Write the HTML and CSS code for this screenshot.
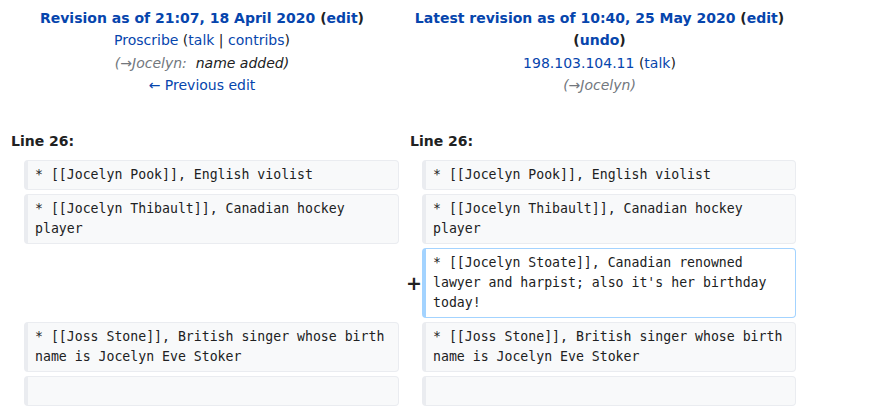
FILE: index.html
```html
<!DOCTYPE html>
<html>
<head>
<meta charset="utf-8">
<link rel="stylesheet" href="styles.css">
</head>
<body>
<div class="diff">
  <div class="title">
    <div><strong><a>Revision as of 21:07, 18 April 2020</a> <span class="paren">(<a>edit</a>)</span></strong></div>
    <div><a>Proscribe</a> (<a>talk</a> | <a>contribs</a>)</div>
    <div class="summary"><span class="grey">(→Jocelyn:</span>&nbsp; name added)</div>
    <div><a>← Previous edit</a></div>
  </div>
  <div class="title">
    <div><strong><a>Latest revision as of 10:40, 25 May 2020</a> (<a>edit</a>)</strong></div>
    <div><strong>(<a>undo</a>)</strong></div>
    <div><a>198.103.104.11</a> (<a>talk</a>)</div>
    <div class="summary grey">(→Jocelyn)</div>
  </div>

  <div class="lineno">Line 26:</div>
  <div class="lineno right">Line 26:</div>

  <div class="marker"></div>
  <div class="line context">* [[Jocelyn Pook]], English violist</div>
  <div class="marker"></div>
  <div class="line context">* [[Jocelyn Pook]], English violist</div>

  <div class="marker"></div>
  <div class="line context">* [[Jocelyn Thibault]], Canadian hockey player</div>
  <div class="marker"></div>
  <div class="line context">* [[Jocelyn Thibault]], Canadian hockey player</div>

  <div class="empty"></div>
  <div class="marker plus"><span>+</span></div>
  <div class="line added">* [[Jocelyn Stoate]], Canadian renowned lawyer and harpist; also it's her birthday today!</div>

  <div class="marker"></div>
  <div class="line context">* [[Joss Stone]], British singer whose birth name is Jocelyn Eve Stoker</div>
  <div class="marker"></div>
  <div class="line context">* [[Joss Stone]], British singer whose birth name is Jocelyn Eve Stoker</div>

  <div class="marker"></div>
  <div class="line context blank"></div>
  <div class="marker"></div>
  <div class="line context blank"></div>
</div>
</body>
</html>
```

FILE: styles.css
```css
html, body {
  margin: 0;
  padding: 0;
  background: #ffffff;
}

body {
  font-family: "DejaVu Sans", sans-serif;
  font-size: 14px;
  color: #202122;
}

a {
  color: #0645ad;
  text-decoration: none;
}

.diff {
  display: grid;
  grid-template-columns: 15px 375px 15px 374px;
  column-gap: 4px;
  row-gap: 4px;
  margin-left: 5px;
  padding-top: 7px;
}

.title {
  grid-column: span 2;
  text-align: center;
  line-height: 22.4px;
}

.summary {
  font-style: italic;
}

.grey {
  color: #72777d;
}

.lineno {
  grid-column: span 2;
  font-weight: bold;
  line-height: 22.4px;
  padding: 29px 0 4px 6px;
}

.lineno.right {
  padding-left: 7px;
}

.empty {
  grid-column: span 2;
}

.marker {
  display: flex;
  align-items: center;
  justify-content: flex-end;
  font-weight: bold;
  font-size: 19px;
  line-height: 1.2;
}

.marker span {
  margin-right: -4px;
}

.line {
  font-family: "DejaVu Sans Mono", monospace;
  font-size: 13.2px;
  line-height: 20px;
  white-space: pre-wrap;
  border-style: solid;
  border-width: 1px 1px 1px 4px;
  border-radius: 4px;
  padding: 4px 7px 4px 7px;
}

.context {
  background: #f8f9fa;
  border-color: #eaecf0;
}

.added {
  background: #ffffff;
  border-color: #a3d3ff;
}

.blank {
  min-height: 20px;
}
```
